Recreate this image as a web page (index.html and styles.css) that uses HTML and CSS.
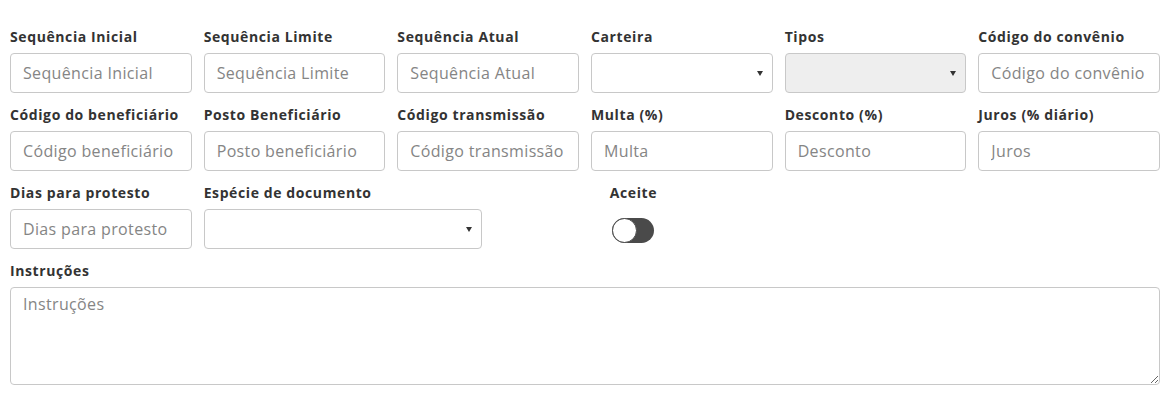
FILE: index.html
```html
<!DOCTYPE html>
<html lang="pt">
<head>
<meta charset="utf-8">
<title>Formulário</title>
<link rel="stylesheet" href="styles.css">
</head>
<body>
<form class="form">
  <div class="row">
    <div class="field c2"><label>Sequência Inicial</label><input class="ctl" type="text" placeholder="Sequência Inicial"></div>
    <div class="field c2"><label>Sequência Limite</label><input class="ctl" type="text" placeholder="Sequência Limite"></div>
    <div class="field c2"><label>Sequência Atual</label><input class="ctl" type="text" placeholder="Sequência Atual"></div>
    <div class="field c2"><label>Carteira</label><div class="ctl sel"><span class="arrow"></span></div></div>
    <div class="field c2"><label>Tipos</label><div class="ctl sel disabled"><span class="arrow"></span></div></div>
    <div class="field c2"><label>Código do convênio</label><input class="ctl" type="text" placeholder="Código do convênio"></div>
  </div>
  <div class="row">
    <div class="field c2"><label>Código do beneficiário</label><input class="ctl" type="text" placeholder="Código beneficiário"></div>
    <div class="field c2"><label>Posto Beneficiário</label><input class="ctl" type="text" placeholder="Posto beneficiário"></div>
    <div class="field c2"><label>Código transmissão</label><input class="ctl" type="text" placeholder="Código transmissão"></div>
    <div class="field c2"><label>Multa (%)</label><input class="ctl" type="text" placeholder="Multa"></div>
    <div class="field c2"><label>Desconto (%)</label><input class="ctl" type="text" placeholder="Desconto"></div>
    <div class="field c2"><label>Juros (% diário)</label><input class="ctl" type="text" placeholder="Juros"></div>
  </div>
  <div class="row">
    <div class="field c2"><label>Dias para protesto</label><input class="ctl" type="text" placeholder="Dias para protesto"></div>
    <div class="field c3"><label>Espécie de documento</label><div class="ctl sel"><span class="arrow"></span></div></div>
    <div class="field c3 center"><label>Aceite</label><span class="toggle"><span class="knob"></span></span></div>
  </div>
  <div class="row">
    <div class="field c12"><label>Instruções</label><textarea class="ctl area" placeholder="Instruções"></textarea></div>
  </div>
</form>
</body>
</html>
```
FILE: styles.css
```css
* { box-sizing: border-box; }
html, body { margin: 0; padding: 0; background: #fff; }
body { font-family: "Open Sans", "Liberation Sans", sans-serif; color: #333; }
.form { padding: 28px 9px 0 10px; display: flex; flex-direction: column; gap: 13px; }
.row { display: grid; grid-template-columns: repeat(12, 1fr); column-gap: 12px; }
.c2 { grid-column: span 2; }
.c3 { grid-column: span 3; }
.c12 { grid-column: span 12; }
.field { display: flex; flex-direction: column; min-width: 0; }
.field.center { align-items: center; }
label { display: block; font-size: 14px; font-weight: 700; letter-spacing: 0.6px; line-height: 18px; height: 18px; margin-bottom: 7px; color: #333; white-space: nowrap; }
.ctl { display: block; width: 100%; height: 40px; border: 1px solid #c8c8c8; border-radius: 4px; background: #fff; font-family: inherit; font-size: 16px; letter-spacing: 0.35px; color: #555; padding: 0 12px; outline: none; }
.ctl::placeholder { color: #858585; }
.sel { position: relative; }
.sel.disabled { background: #eee; }
.arrow { position: absolute; right: 9px; top: 17px; width: 0; height: 0; border-left: 3px solid transparent; border-right: 3px solid transparent; border-top: 5px solid #333; }
.area { height: 98px; padding: 5px 12px; resize: vertical; line-height: 22px; }
.toggle { position: relative; display: block; width: 42px; height: 25px; margin-top: 9px; border-radius: 13px; background: #4a4a4a; }
.knob { position: absolute; left: 0; top: 0; width: 25px; height: 25px; border-radius: 50%; background: #fff; border: 1.5px solid #4a4a4a; }
```
